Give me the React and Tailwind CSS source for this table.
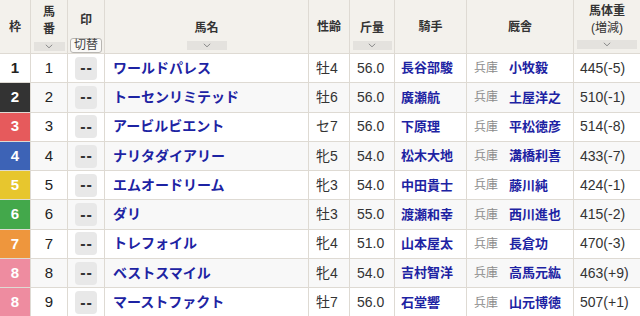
import React from 'react'

// Column layout shared by header and rows
const COLS = 'grid grid-cols-[31px_37px_37px_204px_41px_45px_72px_107px_66px]'

const FRAME_STYLES = {
  1: 'bg-white text-[#222]',
  2: 'bg-[#333333] text-white',
  3: 'bg-[#e65a5c] text-white',
  4: 'bg-[#3d63b6] text-white',
  5: 'bg-[#e7c62e] text-white',
  6: 'bg-[#43a84b] text-white',
  7: 'bg-[#ee963d] text-white',
  8: 'bg-[#ee8ca0] text-white',
}

const horses = [
  { frame: 1, num: 1, name: 'ワールドパレス', sex: '牡4', kg: '56.0', jockey: '長谷部駿', trainer: '小牧毅', weight: '445(-5)' },
  { frame: 2, num: 2, name: 'トーセンリミテッド', sex: '牡6', kg: '56.0', jockey: '廣瀬航', trainer: '土屋洋之', weight: '510(-1)' },
  { frame: 3, num: 3, name: 'アービルビエント', sex: 'セ7', kg: '56.0', jockey: '下原理', trainer: '平松徳彦', weight: '514(-8)' },
  { frame: 4, num: 4, name: 'ナリタダイアリー', sex: '牝5', kg: '54.0', jockey: '松木大地', trainer: '溝橋利喜', weight: '433(-7)' },
  { frame: 5, num: 5, name: 'エムオードリーム', sex: '牝3', kg: '54.0', jockey: '中田貴士', trainer: '藤川純', weight: '424(-1)' },
  { frame: 6, num: 6, name: 'ダリ', sex: '牡3', kg: '55.0', jockey: '渡瀬和幸', trainer: '西川進也', weight: '415(-2)' },
  { frame: 7, num: 7, name: 'トレフォイル', sex: '牝4', kg: '51.0', jockey: '山本屋太', trainer: '長倉功', weight: '470(-3)' },
  { frame: 8, num: 8, name: 'ベストスマイル', sex: '牝4', kg: '54.0', jockey: '吉村智洋', trainer: '高馬元紘', weight: '463(+9)' },
  { frame: 8, num: 9, name: 'マーストファクト', sex: '牡7', kg: '56.0', jockey: '石堂響', trainer: '山元博徳', weight: '507(+1)' },
]

function SortBar({ className = '' }) {
  return (
    <div className={`h-[9px] bg-[#e4e2de] flex items-center justify-center ${className}`}>
      <svg width="8" height="5" viewBox="0 0 8 5" fill="none">
        <path d="M0.8 0.8 L4 3.8 L7.2 0.8" stroke="#8a8a8a" strokeWidth="1" />
      </svg>
    </div>
  )
}

export default function App() {
  const cell = 'border-r border-[#dedad3] flex items-center'
  const head = 'border-r border-[#dedad3] flex flex-col items-center font-bold text-[12px] text-[#333]'

  return (
    <div className="w-[640px] h-[316px] overflow-hidden bg-white font-['Liberation_Sans','Noto_Sans_CJK_JP',sans-serif]">
      {/* Header */}
      <div className={`${COLS} h-[54px] bg-[#f3f1ec] border-b border-[#dedad3]`}>
        <div className={`${head} justify-center`}>枠</div>
        <div className={`${head} pt-[4px]`}>
          <span className="leading-[17px]">馬</span>
          <span className="leading-[17px]">番</span>
          <SortBar className="w-[31px] mt-[4px]" />
        </div>
        <div className={`${head} pt-[12px]`}>
          <span className="leading-[17px]">印</span>
          <span className="mt-[9px] px-[3px] h-[15px] leading-[13px] text-[12px] font-normal text-[#444] bg-[#faf9f7] border border-[#b8b6b2] rounded-[3px]">切替</span>
        </div>
        <div className={`${head} pt-[20px]`}>
          <span className="leading-[17px]">馬名</span>
          <SortBar className="w-[40px] mt-[4px]" />
        </div>
        <div className={`${head} justify-center`}>性齢</div>
        <div className={`${head} pt-[20px]`}>
          <span className="leading-[17px]">斤量</span>
          <SortBar className="w-[39px] mt-[4px]" />
        </div>
        <div className={`${head} justify-center`}>騎手</div>
        <div className={`${head} justify-center`}>厩舎</div>
        <div className="flex flex-col items-center font-bold text-[12px] text-[#333] pt-[3px]">
          <span className="leading-[17px]">馬体重</span>
          <span className="leading-[17px] font-normal text-[12px]">(増減)</span>
          <SortBar className="w-[60px] mt-[3px]" />
        </div>
      </div>

      {/* Rows */}
      {horses.map((h, i) => (
        <div
          key={h.num}
          className={`${COLS} h-[29.3px] border-b border-[#dedad3] ${i % 2 === 1 ? 'bg-[#f8f8f8]' : 'bg-white'}`}
        >
          <div className={`${cell} justify-center font-bold text-[15px] ${FRAME_STYLES[h.frame]}`}>{h.frame}</div>
          <div className={`${cell} justify-center text-[15px] text-[#222]`}>{h.num}</div>
          <div className={`${cell} justify-center`}>
            <span className="w-[22px] h-[23px] rounded-[4px] bg-[#e8e8e8] flex items-center justify-center text-[16px] leading-none font-bold text-[#333] tracking-[1px] pl-[1px]">--</span>
          </div>
          <div className={`${cell} pl-[8px] font-bold text-[14px] text-[#1d23a3]`}>{h.name}</div>
          <div className={`${cell} pl-[7px] text-[14px] text-[#333]`}>{h.sex}</div>
          <div className={`${cell} pl-[7px] text-[14px] text-[#333]`}>{h.kg}</div>
          <div className={`${cell} pl-[6px] font-bold text-[13px] text-[#1d23a3]`}>{h.jockey}</div>
          <div className={`${cell} pl-[7px] gap-[11px]`}>
            <span className="text-[12px] text-[#8a8a8a]">兵庫</span>
            <span className="font-bold text-[13px] text-[#1d23a3]">{h.trainer}</span>
          </div>
          <div className="flex items-center pl-[6px] text-[14px] text-[#333]">{h.weight}</div>
        </div>
      ))}
    </div>
  )
}
